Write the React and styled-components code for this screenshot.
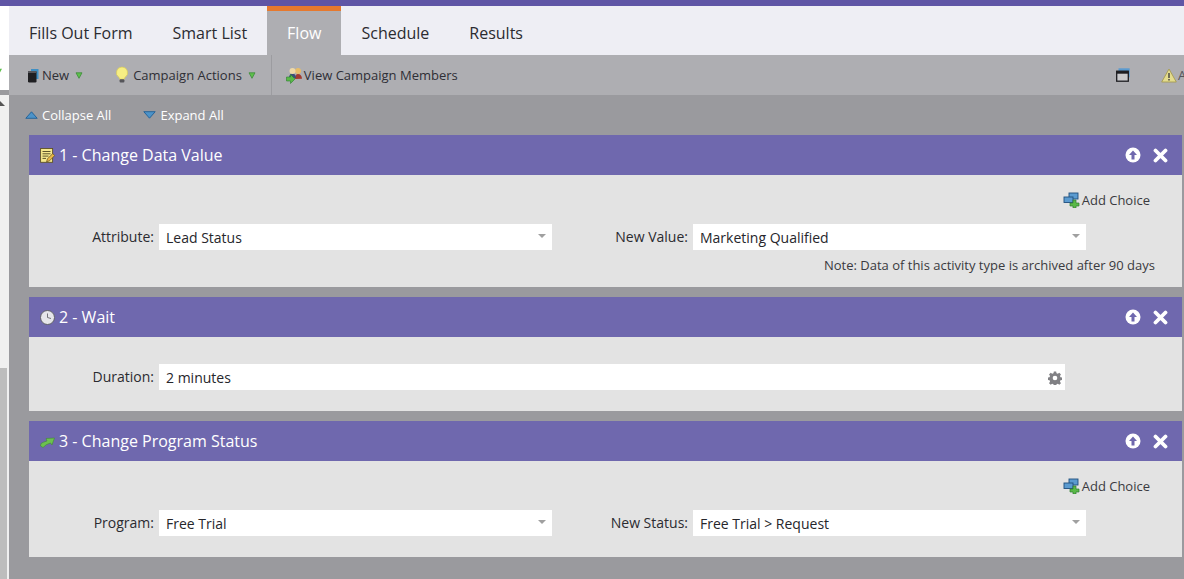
import React from "react";
import styled, { createGlobalStyle } from "styled-components";

const Global = createGlobalStyle`
  html, body { margin: 0; padding: 0; height: 100%; overflow: hidden; background: #9a9a9e; }
  #root { height: 100%; }
  * { box-sizing: border-box; }
`;
const Page = styled.div`
  width: 1184px; height: 579px; display: flex; flex-direction: column; overflow: hidden;
  font-family: "Open Sans", "Liberation Sans", sans-serif; color: #2b2b30;
`;
const TopBar = styled.div`height: 6px; flex: none; background: #5f55a5;`;
const Shell = styled.div`flex: 1; display: flex; min-height: 0;`;
const Rail = styled.div`width: 9px; flex: none; display: flex; flex-direction: column; background: #9a9a9e;`;
const RailTop = styled.div`height: 84px; flex: none; background: #fff; position: relative; overflow: hidden;`;
const RailGap = styled.div`height: 5px; flex: none; background: #9a9a9e;`;
const ScrollTrack = styled.div`flex: 1; background: #f0f0f0; position: relative; padding-top: 273px; display: flex;`;
const ScrollThumb = styled.div`width: 7px; background: #bdbdbd;`;
const ClippedCaret = styled.svg`position: absolute; left: -5px; top: 62px;`;
const ScrollArrow = styled.svg`position: absolute; left: 0; top: 6px;`;
const Main = styled.div`flex: 1; min-width: 0; display: flex; flex-direction: column;`;
const Tabs = styled.div`height: 49px; flex: none; display: flex; background: #eeeef4;`;
const Tab = styled.div`
  height: 49px; padding: ${p => p.$active ? 0 : 5}px 20px 0; display: flex; align-items: center; font-size: 16px;
  color: ${p => p.$active ? "#fff" : "#2b2b30"};
  background: ${p => p.$active ? "#aeaeb2" : "transparent"};
  border-top: ${p => p.$active ? "5px solid #e6792e" : "0"};
`;
const Toolbar = styled.div`height: 40px; flex: none; display: flex; align-items: center; background: #aeaeb2;`;
const ToolGroup = styled.div`height: 100%; display: flex; align-items: center; padding: 0 15px 0 18px; border-right: 1px solid #9c9ca0;`;
const ToolItem = styled.div`display: flex; align-items: center; font-size: 13px; color: #2f2f36; margin: 0 ${p => p.$mr || 0}px 0 ${p => p.$ml || 0}px;`;
const ToolSpacer = styled.div`flex: 1;`;
const Content = styled.div`flex: 1; min-height: 0; background: #9a9a9e; padding-left: 20px;`;
const ExpandRow = styled.div`height: 40px; display: flex; align-items: center; margin-left: -4px;`;
const ExpandItem = styled.div`display: flex; align-items: center; font-size: 13px; color: #fff; margin-right: ${p => p.$mr || 0}px;`;
const Card = styled.section`width: 1153px; margin-bottom: 10px;`;
const CardHead = styled.header`height: 40px; background: #6f68ae; display: flex; align-items: center; color: #fff; font-size: 16px; padding: 0 14px 0 11px;`;
const CardTitle = styled.div`flex: 1; display: flex; align-items: center; gap: 4px;`;
const CardBody = styled.div`background: #e3e3e3; height: ${p => p.$h}px; padding-top: ${p => p.$pt}px;`;
const ChoiceRow = styled.div`display: flex; justify-content: flex-end; align-items: center; height: 16px; padding-right: 32px; font-size: 13px; color: #3a3a40;`;
const FieldRow = styled.div`display: flex; align-items: center; margin-top: ${p => p.$mt || 0}px;`;
const Label = styled.div`width: ${p => p.$w}px; text-align: right; font-size: 14px; padding: 0 5px 2px 0; color: #2b2b30;`;
const Select = styled.div`
  width: ${p => p.$w}px; height: 26px; background: #fff; display: flex; align-items: center; justify-content: space-between;
  padding: 1px 6px 0 7px; font-size: 14px; color: #26262b;
`;
const Caret = styled.span`width: 0; height: 0; border-left: 4px solid transparent; border-right: 4px solid transparent; border-top: 4px solid #a0a0a0; margin-top: -3px;`;
const Note = styled.div`text-align: right; padding-right: 27px; font-size: 13px; color: #3a3a40; margin-top: 6px;`;
const Icon = styled.svg`flex: none; margin: 0 ${p => p.$mr || 0}px 0 ${p => p.$ml || 0}px;`;
const ClippedWarn = styled.div`display: flex; align-items: center; gap: 1px; margin-left: 31px; font-size: 13px; color: #55555a; width: 23px; overflow: hidden; white-space: nowrap;`;

const TriGreen = () => (
  <Icon $ml={6} width="8" height="7" viewBox="0 0 8 7"><path d="M1 .8h6L4 6.300z" fill="#5ec04c" stroke="#3c8a3a" strokeWidth=".8"/></Icon>
);
const NewIcon = () => (
  <Icon $mr={3} width="12" height="15" viewBox="0 0 12 15">
    <path d="M4 1h7.500v10H9V3H4z" fill="#3f8fc4"/><rect x="1" y="3" width="8.500" height="11.500" rx="1.200" fill="#1f1f22"/><rect x="1" y="3" width="8.500" height="2" fill="#55555a"/>
  </Icon>
);
const BulbIcon = () => (
  <Icon $mr={4} width="14" height="18" viewBox="0 0 14 18">
    <path d="M7 1a5.600 5.600 0 0 0-3.200 10.200c.6.6.8 1.300.8 2h4.800c0-.7.2-1.400.8-2A5.600 5.600 0 0 0 7 1z" fill="#f6ee84" stroke="#d5c95a" strokeWidth=".7"/>
    <rect x="4.600" y="13.200" width="4.800" height="3.400" rx="1" fill="#55555a"/>
  </Icon>
);
const MembersIcon = () => (
  <Icon $mr={1} width="17" height="17" viewBox="0 0 17 17">
    <path d="M9 12c0-3 1-5 3-5s4 1.600 4 4.800z" fill="#a23b30"/><circle cx="12" cy="4" r="3" fill="#e8bd68"/>
    <path d="M3 11c0-3 1.500-4.500 3.500-4.500S10 8 10 11z" fill="#3c4f78"/><circle cx="6.500" cy="4" r="3" fill="#efd9a6"/>
    <path d="M.5 10h4V7.500L9 12l-4.500 4.500V14h-4z" fill="#59b947" stroke="#2e7d32" strokeWidth=".6"/>
  </Icon>
);
const TriUp = () => (
  <Icon $mr={4} width="13" height="8" viewBox="0 0 13 8"><path d="M.8 7.300 6.500.8l5.700 6.500z" fill="#4d93c8" stroke="#1f5f96" strokeWidth=".9"/></Icon>
);
const TriDown = () => (
  <Icon $mr={4} width="13" height="8" viewBox="0 0 13 8"><path d="M.8.7h11.400L6.500 7.200z" fill="#4d93c8" stroke="#1f5f96" strokeWidth=".9"/></Icon>
);
const NoteIcon = () => (
  <Icon width="15" height="16" viewBox="0 0 15 16">
    <rect x=".6" y="1.500" width="12" height="13.800" fill="#f6e98e" stroke="#5e5224" strokeWidth=".9"/>
    <path d="M2.500 4.500h8M2.500 6.800h8M2.500 9.100h6M2.500 11.400h3.500" stroke="#4c4520" strokeWidth=".9"/>
    <path d="M6.500 14.800l1-3 5.200-5.200 2 2-5.200 5.200z" fill="#e9b949" stroke="#5d4a1e" strokeWidth=".7"/>
  </Icon>
);
const ClockIcon = () => (
  <Icon width="15" height="16" viewBox="0 0 15 16">
    <circle cx="7.500" cy="8.500" r="7" fill="#e6e6ea" stroke="#5f5f66" strokeWidth="1"/>
    <path d="M7.500 8.500V4.500M7.500 8.500l3.500 1" stroke="#55555c" strokeWidth=".8" fill="none"/>
  </Icon>
);
const GreenArrow = () => (
  <Icon width="15" height="16" viewBox="0 0 15 16">
    <path d="M.5 13 1 10.500Q3 9 7 8L6 5.500 14.500 5 12 12l-1.500-2Q6 11 3 14.500z" fill="#6cc14f" stroke="#418a35" strokeWidth=".6"/>
  </Icon>
);
const UpCircle = () => (
  <Icon $mr={12} width="16" height="16" viewBox="0 0 16 16">
    <circle cx="8" cy="8" r="7.500" fill="#fff"/><path d="M8 3.500 12 8H9.500v4.500h-3V8H4z" fill="#6f68ae"/>
  </Icon>
);
const CloseX = () => (
  <Icon width="15" height="15" viewBox="0 0 15 15"><path d="M2.500 2.500l10 10M12.500 2.500l-10 10" stroke="#fff" strokeWidth="3.800" strokeLinecap="round"/></Icon>
);
const AddChoiceIcon = () => (
  <Icon $mr={2} width="17" height="16" viewBox="0 0 17 16">
    <rect x="6" y="1" width="9" height="6" fill="#5b9bd0" stroke="#1f4f7d" strokeWidth=".9"/>
    <rect x="1" y="5" width="9" height="5.500" fill="#5b9bd0" stroke="#1f4f7d" strokeWidth=".9"/>
    <path d="M10 8h3v3h3v3h-3v2h-3v-2H7v-3h3z" fill="#59b947" stroke="#2e7d32" strokeWidth=".7"/>
  </Icon>
);
const Gear = () => (
  <Icon $mr={-3} width="14" height="14" viewBox="0 0 24 24">
    <path fill="#808084" fillRule="evenodd" d="M10 1h4l.6 3 2.200.9 2.600-1.700 2.800 2.800-1.700 2.600.9 2.200 3 .6v4l-3 .6-.9 2.200 1.700 2.600-2.800 2.800-2.600-1.700-2.200.9-.6 3h-4l-.6-3-2.200-.9-2.600 1.700-2.800-2.800 1.700-2.600-.9-2.200-3-.6v-4l3-.6.9-2.200-1.700-2.600L4.600 3.200l2.600 1.700L9.400 4zM12 8a4 4 0 1 0 0 8 4 4 0 0 0 0-8z"/>
  </Icon>
);
const WindowIcon = () => (
  <Icon width="14" height="14" viewBox="0 0 14 14">
    <rect x="2.500" y=".3" width="11.200" height="9" fill="#5b9bd0"/>
    <rect x=".7" y="3.200" width="11.600" height="10" fill="#c9c9cc" stroke="#1c1c20" strokeWidth="1.300"/>
    <rect x=".7" y="3.200" width="11.600" height="2.500" fill="#1c1c20"/>
  </Icon>
);
const WarnIcon = () => (
  <Icon width="16" height="15" viewBox="0 0 16 15">
    <path d="M8 1 15.300 14H.7z" fill="#e4dc8e" stroke="#a69c50" strokeWidth=".9"/>
    <path d="M8 5v5M8 11v1.500" stroke="#333" strokeWidth="1.300"/>
  </Icon>
);

const Step = ({ icon, title, bodyH, pt, children }) => (
  <Card>
    <CardHead>
      <CardTitle>{icon}{title}</CardTitle>
      <UpCircle /><CloseX />
    </CardHead>
    <CardBody $h={bodyH} $pt={pt}>{children}</CardBody>
  </Card>
);
const AddChoice = () => <ChoiceRow><AddChoiceIcon />Add Choice</ChoiceRow>;
const Pair = ({ a, av, b, bv, mt }) => (
  <FieldRow $mt={mt}>
    <Label $w={130}>{a}</Label>
    <Select $w={393}>{av}<Caret /></Select>
    <Label $w={141}>{b}</Label>
    <Select $w={393}>{bv}<Caret /></Select>
  </FieldRow>
);

export default function App() {
  return (
    <Page>
      <Global />
      <TopBar />
      <Shell>
        <Rail>
          <RailTop>
            <ClippedCaret width="8" height="7" viewBox="0 0 8 7"><path d="M1 .8h6L4 6.300z" fill="#5ec04c"/></ClippedCaret>
          </RailTop>
          <RailGap />
          <ScrollTrack>
            <ScrollArrow width="5" height="6" viewBox="0 0 5 6"><path d="M0 0 5 5H0z" fill="#555"/></ScrollArrow>
            <ScrollThumb />
          </ScrollTrack>
        </Rail>
        <Main>
          <Tabs>
            <Tab>Fills Out Form</Tab>
            <Tab>Smart List</Tab>
            <Tab $active>Flow</Tab>
            <Tab>Schedule</Tab>
            <Tab>Results</Tab>
          </Tabs>
          <Toolbar>
            <ToolGroup>
              <ToolItem $mr={32}><NewIcon />New<TriGreen /></ToolItem>
              <ToolItem><BulbIcon />Campaign Actions<TriGreen /></ToolItem>
            </ToolGroup>
            <ToolItem $ml={14}><MembersIcon />View Campaign Members</ToolItem>
            <ToolSpacer />
            <WindowIcon />
            <ClippedWarn><WarnIcon />A</ClippedWarn>
          </Toolbar>
          <Content>
            <ExpandRow>
              <ExpandItem $mr={32}><TriUp />Collapse All</ExpandItem>
              <ExpandItem><TriDown />Expand All</ExpandItem>
            </ExpandRow>
            <Step icon={<NoteIcon />} title="1 - Change Data Value" bodyH={112} pt={17}>
              <AddChoice />
              <Pair mt={16} a="Attribute:" av="Lead Status" b="New Value:" bv="Marketing Qualified" />
              <Note>Note: Data of this activity type is archived after 90 days</Note>
            </Step>
            <Step icon={<ClockIcon />} title="2 - Wait" bodyH={74} pt={27}>
              <FieldRow>
                <Label $w={130}>Duration:</Label>
                <Select $w={906}>2 minutes<Gear /></Select>
              </FieldRow>
            </Step>
            <Step icon={<GreenArrow />} title="3 - Change Program Status" bodyH={96} pt={17}>
              <AddChoice />
              <Pair mt={16} a="Program:" av="Free Trial" b="New Status:" bv="Free Trial > Request" />
            </Step>
          </Content>
        </Main>
      </Shell>
    </Page>
  );
}
